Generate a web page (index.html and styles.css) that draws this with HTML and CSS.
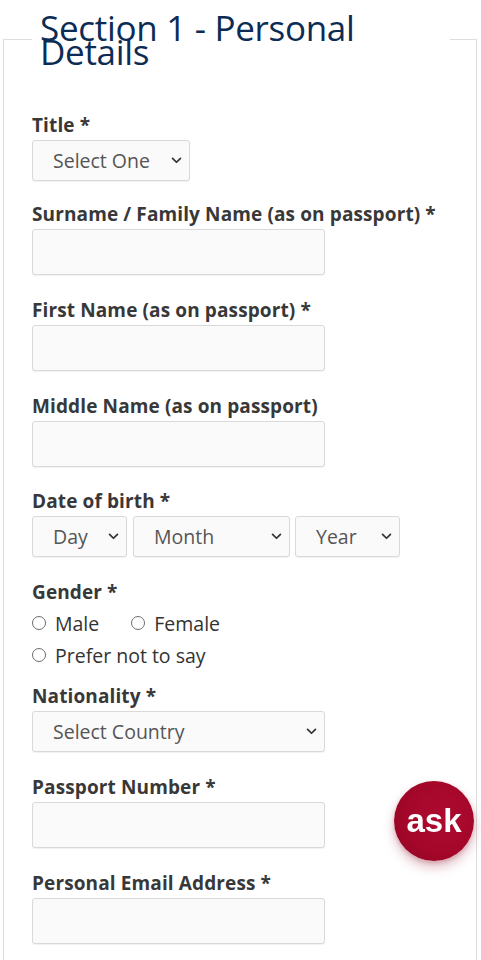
FILE: index.html
```html
<!DOCTYPE html>
<html lang="en">
<head>
<meta charset="utf-8">
<title>Section 1 - Personal Details</title>
<link rel="stylesheet" href="styles.css">
</head>
<body>
<form class="form">
  <fieldset class="section">
    <legend class="section-title">Section 1 - Personal Details</legend>

    <div class="field field-title">
      <label class="label" for="title">Title *</label>
      <span class="select w-title">
        <select id="title"><option>Select One</option></select>
        <svg class="chev" viewBox="0 0 12 8" aria-hidden="true"><path d="M1.5 1.5 L6 6 L10.5 1.5"/></svg>
      </span>
    </div>

    <div class="field">
      <label class="label" for="surname">Surname / Family Name (as on passport) *</label>
      <input class="input" id="surname" type="text">
    </div>

    <div class="field">
      <label class="label" for="first">First Name (as on passport) *</label>
      <input class="input" id="first" type="text">
    </div>

    <div class="field field-middle">
      <label class="label" for="middle">Middle Name (as on passport)</label>
      <input class="input" id="middle" type="text">
    </div>

    <div class="field field-dob">
      <label class="label" for="day">Date of birth *</label>
      <div class="dob">
        <span class="select w-day">
          <select id="day"><option>Day</option></select>
          <svg class="chev" viewBox="0 0 12 8" aria-hidden="true"><path d="M1.5 1.5 L6 6 L10.5 1.5"/></svg>
        </span>
        <span class="select w-month">
          <select><option>Month</option></select>
          <svg class="chev" viewBox="0 0 12 8" aria-hidden="true"><path d="M1.5 1.5 L6 6 L10.5 1.5"/></svg>
        </span>
        <span class="select w-year">
          <select><option>Year</option></select>
          <svg class="chev" viewBox="0 0 12 8" aria-hidden="true"><path d="M1.5 1.5 L6 6 L10.5 1.5"/></svg>
        </span>
      </div>
    </div>

    <div class="field field-gender">
      <span class="label">Gender *</span>
      <div class="radios">
        <label class="radio r-male"><input type="radio" name="gender"><span>Male</span></label>
        <label class="radio"><input type="radio" name="gender"><span>Female</span></label>
      </div>
      <div class="radios">
        <label class="radio"><input type="radio" name="gender"><span>Prefer not to say</span></label>
      </div>
    </div>

    <div class="field field-nat">
      <label class="label" for="nat">Nationality *</label>
      <span class="select w-full">
        <select id="nat"><option>Select Country</option></select>
        <svg class="chev" viewBox="0 0 12 8" aria-hidden="true"><path d="M1.5 1.5 L6 6 L10.5 1.5"/></svg>
      </span>
    </div>

    <div class="field">
      <label class="label" for="passport">Passport Number *</label>
      <input class="input" id="passport" type="text">
    </div>

    <div class="field">
      <label class="label" for="email">Personal Email Address *</label>
      <input class="input" id="email" type="email">
    </div>
  </fieldset>
</form>

<button class="ask" type="button">ask</button>
</body>
</html>
```

FILE: styles.css
```css
html, body {
  margin: 0;
  padding: 0;
  background: #ffffff;
}

body {
  font-family: "Open Sans", "Liberation Sans", sans-serif;
  color: #383838;
}

.form {
  margin: 0;
}

.section {
  margin: 0 4px 0 3px;
  padding: 36px 28px 40px 28px;
  border: 1px solid #dedede;
  min-width: 0;
}

.section-title {
  box-sizing: border-box;
  width: 418px;
  padding: 16px 8px 14px 8px;
  font-family: "Open Sans", sans-serif;
  font-size: 35px;
  font-weight: 400;
  line-height: 24px;
  letter-spacing: -0.3px;
  color: #0c2c55;
}

.field {
  margin-bottom: 24px;
}

.field-title {
  margin-bottom: 22px;
}

.field-middle {
  margin-bottom: 23px;
}

.label {
  display: block;
  font-size: 19px;
  font-weight: 700;
  line-height: 22px;
  letter-spacing: 0.12px;
  color: #383838;
  margin-bottom: 4px;
}

.input {
  display: block;
  box-sizing: border-box;
  width: 293px;
  height: 46px;
  margin: 0;
  border: 1px solid #d9d9d9;
  border-radius: 3px;
  background: #fafafa;
  box-shadow: 0 1px 1px rgba(0, 0, 0, 0.06);
}

.select {
  position: relative;
  display: inline-block;
  vertical-align: top;
}

.select select {
  -webkit-appearance: none;
  appearance: none;
  display: block;
  box-sizing: border-box;
  width: 100%;
  height: 41px;
  margin: 0;
  padding: 0 0 0 20px;
  border: 1px solid #d9d9d9;
  border-radius: 3px;
  background: #fafafa;
  box-shadow: 0 1px 1px rgba(0, 0, 0, 0.06);
  font-family: "Open Sans", sans-serif;
  font-size: 19.5px;
  color: #555555;
}

.chev {
  position: absolute;
  right: 8px;
  top: 17px;
  width: 11px;
  height: 7px;
  pointer-events: none;
}

.chev path {
  fill: none;
  stroke: #333333;
  stroke-width: 2;
  stroke-linecap: round;
  stroke-linejoin: round;
}

.w-title { width: 158px; }
.w-day { width: 95px; }
.w-month { width: 157px; }
.w-year { width: 105px; }
.w-full { width: 293px; }

.dob {
  display: flex;
  gap: 5px;
}
.dob .w-month { margin-left: 1px; }

.field-gender {
  margin-bottom: 14px;
}

.radios {
  display: flex;
  height: 32px;
  align-items: center;
}

.radios:first-of-type {
  margin-top: 3px;
}

.radio {
  display: inline-flex;
  align-items: center;
  font-size: 19.5px;
  font-weight: 400;
  color: #333333;
}

.radio input {
  -webkit-appearance: none;
  appearance: none;
  box-sizing: border-box;
  width: 14px;
  height: 14px;
  margin: 0 9px 0 0;
  border: 1px solid #6e6e6e;
  border-radius: 50%;
  background: #ffffff;
}

.r-male {
  margin-right: 32px;
}

.ask {
  position: fixed;
  left: 394px;
  top: 781px;
  width: 80px;
  height: 80px;
  padding: 0 0 2px 0;
  border: none;
  border-radius: 50%;
  background: radial-gradient(circle at 60% 45%, #ae0b2f 0%, #a4072a 55%, #8e0322 100%);
  box-shadow: 0 6px 12px rgba(140, 10, 40, 0.28), 0 2px 4px rgba(140, 10, 40, 0.2);
  color: #ffffff;
  font-family: "Liberation Sans", Arial, sans-serif;
  font-size: 33px;
  font-weight: 700;
  line-height: 1;
}
```
